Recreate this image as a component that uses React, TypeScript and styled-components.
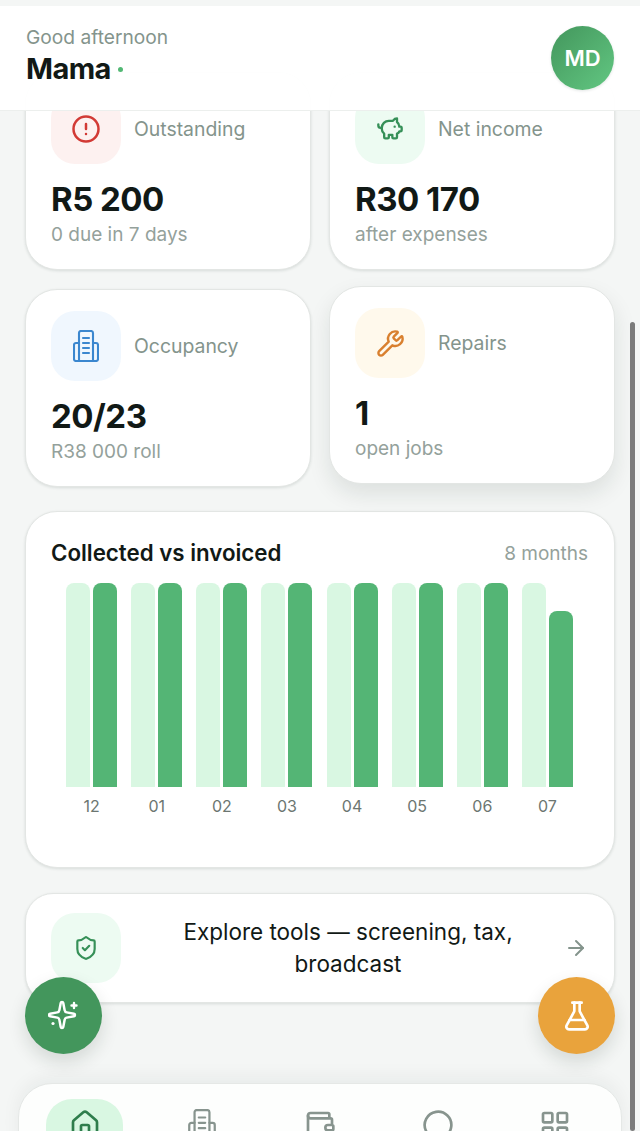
import React from "react";
import styled, { createGlobalStyle } from "styled-components";
import {
	ArrowRight,
	CircleAlert,
	FlaskConical,
	House,
	LayoutGrid,
	MessageCircle,
	PiggyBank,
	ShieldCheck,
	Wallet,
	Wrench,
} from "lucide-react";

const GlobalStyle = createGlobalStyle`
	html, body {
		margin: 0;
		padding: 0;
		background: #f4f6f5;
		font-family: "Inter", "Liberation Sans", sans-serif;
	}
`;

const Screen = styled.div`
	position: relative;
	width: 640px;
	height: 1131px;
	overflow: hidden;
	background: #f4f6f5;
`;

const Content = styled.main`
	display: flex;
	flex-direction: column;
	padding: 72px 25px 0;
	width: 590px;
`;

const Header = styled.header`
	position: absolute;
	top: 6px;
	left: 0;
	right: 0;
	height: 105px;
	box-sizing: border-box;
	padding: 20px 26px 0 26px;
	display: flex;
	align-items: flex-start;
	justify-content: space-between;
	background: rgba(255, 255, 255, 0.96);
	border-bottom: 1px solid #ecefed;
	z-index: 2;
`;

const Greeting = styled.div`
	font-size: 19.2px;
	line-height: 23px;
	color: #84948c;
`;

const Name = styled.div`
	display: flex;
	align-items: center;
	gap: 7px;
	margin-top: 3px;
	font-size: 29px;
	line-height: 34px;
	font-weight: 700;
	letter-spacing: -0.6px;
	color: #111916;
`;

const Dot = styled.span`
	width: 5px;
	height: 5px;
	border-radius: 50%;
	background: #52b874;
`;

const Avatar = styled.div`
	width: 63px;
	height: 64px;
	border-radius: 50%;
	display: flex;
	align-items: center;
	justify-content: center;
	background: linear-gradient(135deg, #43965c, #62c782);
	color: #fff;
	font-size: 22px;
	font-weight: 600;
	box-shadow: 0 1px 3px rgba(20, 40, 30, 0.12);
`;

const StatGrid = styled.section`
	display: grid;
	grid-template-columns: 286px 286px;
	column-gap: 18px;
	row-gap: 19px;
`;

const Card = styled.div<{ $lifted?: boolean }>`
	box-sizing: border-box;
	height: 198px;
	padding: 21px 25px 0;
	background: #fff;
	border-radius: 32px;
	border: 1px solid #e3e6e4;
	box-shadow: ${(p) =>
		p.$lifted
			? "0 10px 22px rgba(20, 40, 30, 0.1)"
			: "0 1px 3px rgba(20, 40, 30, 0.12)"};
	transform: ${(p) => (p.$lifted ? "translateY(-3px)" : "none")};
`;

const CardHead = styled.div`
	display: flex;
	align-items: center;
	gap: 13px;
`;

const Tile = styled.div<{ $bg: string; $fg: string }>`
	flex: none;
	width: 70px;
	height: 70px;
	border-radius: 24px;
	display: flex;
	align-items: center;
	justify-content: center;
	background: ${(p) => p.$bg};
	color: ${(p) => p.$fg};
`;

const Label = styled.div`
	font-size: 19.4px;
	color: #84948c;
`;

const Value = styled.div`
	margin-top: 16px;
	font-size: 33px;
	line-height: 38px;
	font-weight: 700;
	letter-spacing: -0.5px;
	color: #111916;
`;

const Sub = styled.div`
	margin-top: 5px;
	font-size: 19px;
	line-height: 24px;
	color: #94a19b;
`;

const ChartCard = styled.section`
	box-sizing: border-box;
	height: 357px;
	margin-top: 24px;
	padding: 26px 26px 0 25px;
	background: #fff;
	border-radius: 32px;
	border: 1px solid #e3e6e4;
	box-shadow: 0 1px 3px rgba(20, 40, 30, 0.12);
`;

const ChartHead = styled.div`
	display: flex;
	align-items: center;
	justify-content: space-between;
`;

const ChartTitle = styled.h2`
	margin: 0;
	font-size: 22.3px;
	line-height: 30px;
	font-weight: 600;
	color: #111916;
`;

const ChartRange = styled.span`
	font-size: 19px;
	color: #94a19b;
`;

const Chart = styled.div`
	display: grid;
	grid-template-columns: repeat(8, 1fr);
	padding: 0 8px;
	margin-top: 15px;
`;

const Month = styled.div`
	display: flex;
	flex-direction: column;
	align-items: center;
`;

const Bars = styled.div`
	display: flex;
	align-items: flex-end;
	gap: 3px;
	height: 204px;
`;

const Bar = styled.div<{ $dark?: boolean }>`
	width: 24px;
	border-radius: 8px 8px 0 0;
	background: ${(p) => (p.$dark ? "#54b575" : "#d9f7e2")};
`;

const MonthLabel = styled.div`
	margin-top: 9px;
	font-size: 16px;
	line-height: 20px;
	color: #6c7671;
`;

const ToolsCard = styled.section`
	box-sizing: border-box;
	height: 110px;
	margin-top: 25px;
	padding: 0 26px 0 25px;
	display: flex;
	align-items: center;
	background: #fff;
	border-radius: 28px;
	border: 1px solid #e3e6e4;
	box-shadow: 0 1px 3px rgba(20, 40, 30, 0.12);
`;

const ToolsText = styled.div`
	flex: 1;
	margin-left: 11px;
	padding: 0 8px;
	text-align: center;
	font-size: 22.5px;
	line-height: 32px;
	color: #111916;
`;

const ToolsArrow = styled.div`
	flex: none;
	display: flex;
	color: #84948c;
`;

const Fab = styled.button<{ $side: "left" | "right"; $bg: string }>`
	position: absolute;
	top: 977px;
	${(p) => p.$side}: 25px;
	width: 77px;
	height: 77px;
	padding: 0;
	border: none;
	border-radius: 50%;
	display: flex;
	align-items: center;
	justify-content: center;
	color: #fff;
	background: ${(p) => p.$bg};
	box-shadow: 0 8px 18px rgba(20, 40, 30, 0.14);
	z-index: 3;
`;

const Nav = styled.nav`
	position: absolute;
	top: 1083px;
	left: 18px;
	width: 604px;
	height: 90px;
	box-sizing: border-box;
	padding: 15px 7px 0;
	display: grid;
	grid-template-columns: repeat(5, 1fr);
	justify-items: center;
	align-items: start;
	background: #fdfefd;
	border-radius: 34px;
	border: 1px solid #e5e8e6;
	box-shadow: 0 -6px 18px rgba(20, 40, 30, 0.05);
	z-index: 2;
`;

const NavItem = styled.div<{ $active?: boolean }>`
	width: 77px;
	height: 60px;
	border-radius: 26px;
	display: flex;
	justify-content: center;
	padding-top: 10px;
	box-sizing: border-box;
	background: ${(p) => (p.$active ? "#d9f7e2" : "transparent")};
	color: ${(p) => (p.$active ? "#2f7d4c" : "#87948e")};
`;

const Scrollbar = styled.div`
	position: absolute;
	top: 322px;
	right: 5px;
	bottom: 0;
	width: 5px;
	border-radius: 3px;
	background: #7b7b7b;
	z-index: 4;
`;

// tower with two side wings, taller than the lucide building
function TowerIcon({ width, height }: { width: number; height: number }) {
	return (
		<svg
			width={width}
			height={height}
			viewBox="0 0 26 32"
			fill="none"
			stroke="currentColor"
			strokeWidth={2.1}
			strokeLinecap="round"
			strokeLinejoin="round"
		>
			<path d="M6 31V3a2 2 0 0 1 2-2h10a2 2 0 0 1 2 2v28Z" />
			<path d="M6 13H3a2 2 0 0 0-2 2v14a2 2 0 0 0 2 2h3" />
			<path d="M20 13h3a2 2 0 0 1 2 2v14a2 2 0 0 1-2 2h-3" />
			<path d="M10 8h6M10 13h6M10 18h6M10 23h6" />
		</svg>
	);
}

// four point star, a plus at the upper right and a small filled dot at the lower left
function SparkIcon() {
	return (
		<svg
			width={32}
			height={32}
			viewBox="0 0 32 32"
			fill="none"
			stroke="currentColor"
			strokeWidth={2.4}
			strokeLinecap="round"
			strokeLinejoin="round"
		>
			<path
				transform="translate(-1.6 -0.6) scale(1.3)"
				strokeWidth={1.9}
				d="M11.017 2.814a1 1 0 0 1 1.966 0l1.051 5.558a2 2 0 0 0 1.594 1.594l5.558 1.051a1 1 0 0 1 0 1.966l-5.558 1.051a2 2 0 0 0-1.594 1.594l-1.051 5.558a1 1 0 0 1-1.966 0l-1.051-5.558a2 2 0 0 0-1.594-1.594l-5.558-1.051a1 1 0 0 1 0-1.966l5.558-1.051a2 2 0 0 0 1.594-1.594z"
			/>
			<path d="M26 3v5M23.5 5.5h5" />
			<circle cx={5} cy={23.5} r={1.6} fill="currentColor" stroke="none" />
		</svg>
	);
}

const months = [
	{ label: "12", collected: 204 },
	{ label: "01", collected: 204 },
	{ label: "02", collected: 204 },
	{ label: "03", collected: 204 },
	{ label: "04", collected: 204 },
	{ label: "05", collected: 204 },
	{ label: "06", collected: 204 },
	{ label: "07", collected: 176 },
];

function App() {
	return (
		<Screen>
			<GlobalStyle />
			<Header>
				<div>
					<Greeting>Good afternoon</Greeting>
					<Name>
						Mama
						<Dot />
					</Name>
				</div>
				<Avatar>MD</Avatar>
			</Header>
			<Content>
				<StatGrid>
					<Card>
						<CardHead>
							<Tile $bg="#fdf1f0" $fg="#d23a35">
								<CircleAlert size={30} strokeWidth={2} />
							</Tile>
							<Label>Outstanding</Label>
						</CardHead>
						<Value>R5 200</Value>
						<Sub>0 due in 7 days</Sub>
					</Card>
					<Card>
						<CardHead>
							<Tile $bg="#edfbf2" $fg="#369058">
								<PiggyBank size={28} strokeWidth={2} />
							</Tile>
							<Label>Net income</Label>
						</CardHead>
						<Value>R30 170</Value>
						<Sub>after expenses</Sub>
					</Card>
					<Card>
						<CardHead>
							<Tile $bg="#f0f7fe" $fg="#3b87cf">
								<TowerIcon width={26} height={32} />
							</Tile>
							<Label>Occupancy</Label>
						</CardHead>
						<Value>20/23</Value>
						<Sub>R38 000 roll</Sub>
					</Card>
					<Card $lifted>
						<CardHead>
							<Tile $bg="#fff9ec" $fg="#d9802f">
								<Wrench size={29} strokeWidth={2} />
							</Tile>
							<Label>Repairs</Label>
						</CardHead>
						<Value>1</Value>
						<Sub>open jobs</Sub>
					</Card>
				</StatGrid>
				<ChartCard>
					<ChartHead>
						<ChartTitle>Collected vs invoiced</ChartTitle>
						<ChartRange>8 months</ChartRange>
					</ChartHead>
					<Chart>
						{months.map((m) => (
							<Month key={m.label}>
								<Bars>
									<Bar style={{ height: 204 }} />
									<Bar $dark style={{ height: m.collected }} />
								</Bars>
								<MonthLabel>{m.label}</MonthLabel>
							</Month>
						))}
					</Chart>
				</ChartCard>
				<ToolsCard>
					<Tile $bg="#edfbf2" $fg="#369058">
						<ShieldCheck size={26} strokeWidth={2} />
					</Tile>
					<ToolsText>Explore tools — screening, tax, broadcast</ToolsText>
					<ToolsArrow>
						<ArrowRight size={24} strokeWidth={2} />
					</ToolsArrow>
				</ToolsCard>
			</Content>
			<Fab $side="left" $bg="#43965c">
				<SparkIcon />
			</Fab>
			<Fab $side="right" $bg="#e9a33c">
				<FlaskConical size={32} strokeWidth={2} />
			</Fab>
			<Nav>
				<NavItem $active>
					<House size={32} strokeWidth={2} />
				</NavItem>
				<NavItem>
					<TowerIcon width={28} height={34} />
				</NavItem>
				<NavItem>
					<Wallet size={32} strokeWidth={2} />
				</NavItem>
				<NavItem>
					<MessageCircle size={32} strokeWidth={2} />
				</NavItem>
				<NavItem>
					<LayoutGrid size={32} strokeWidth={2} />
				</NavItem>
			</Nav>
			<Scrollbar />
		</Screen>
	);
}

export default App;
